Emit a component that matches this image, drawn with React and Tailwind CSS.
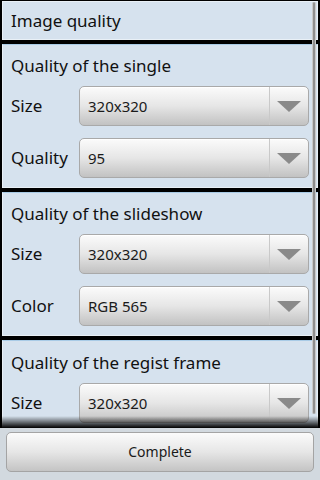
import React from "react";

const font = { fontFamily: '"Noto Sans", "Open Sans", "DejaVu Sans", sans-serif' };

function Spinner({ value }) {
  return (
    <div className="flex h-[40px] w-[230px] rounded-[5px] border border-[#a9a9a9] bg-gradient-to-b from-[#fbfbfb] via-[#e6e6e6] to-[#c2c2c2] shadow-[inset_0_1px_0_#ffffff]">
      <div className="flex flex-1 items-center pl-[8px] text-[15px] text-[#1a1a1a]">
        {value}
      </div>
      <div className="flex w-[39px] items-center justify-center border-l border-[#c9c9c9]">
        <svg width="24" height="11" viewBox="0 0 24 11">
          <path d="M0 0 H24 L12 11 Z" fill="#8a8a8a" />
        </svg>
      </div>
    </div>
  );
}

function Row({ label, value }) {
  return (
    <div className="flex h-[40px] shrink-0 items-center">
      <span className="w-[76px] pl-[8px] text-[17px] text-[#111]">{label}</span>
      <Spinner value={value} />
    </div>
  );
}

function Section({ title, rows }) {
  return (
    <div className="mx-[2px] flex h-[144px] shrink-0 flex-col gap-[12px] border border-[#e9f0f6] border-t-[#a9cbe6] bg-[#d6e2ee] pb-[9px] pt-[5px]">
      <div className="-mb-[8px] flex h-[33px] items-center pl-[8px] text-[17px] text-[#111]">
        {title}
      </div>
      {rows.map((r) => (
        <Row key={r.label} label={r.label} value={r.value} />
      ))}
    </div>
  );
}

export default function App() {
  return (
    <div className="flex h-[480px] w-[320px] flex-col overflow-hidden bg-black" style={font}>
      <div className="relative h-[428px] shrink-0 overflow-hidden">
        <div className="flex flex-col gap-[4px] pt-[1px]">
          <div className="mx-[2px] flex h-[39px] items-center border border-[#e9f0f6] bg-[#d6e2ee] pl-[8px] text-[17px] text-[#111]">
            Image quality
          </div>
          <Section
            title="Quality of the single"
            rows={[
              { label: "Size", value: "320x320" },
              { label: "Quality", value: "95" },
            ]}
          />
          <Section
            title="Quality of the slideshow"
            rows={[
              { label: "Size", value: "320x320" },
              { label: "Color", value: "RGB 565" },
            ]}
          />
          <Section
            title="Quality of the regist frame"
            rows={[{ label: "Size", value: "320x320" }]}
          />
        </div>
        {/* scrollbar */}
        <div className="absolute right-[4px] top-[2px] h-[412px] w-[4px] rounded-[2px] border-x border-[#c8c8c8] bg-[#8e8e8e]" />
        {/* bottom fade */}
        <div className="absolute bottom-0 left-0 right-0 h-[12px] bg-gradient-to-b from-transparent to-black" />
      </div>
      <div className="flex flex-1 flex-col bg-[#d2d9df] px-[6px] pt-[4px]">
        <div className="flex h-[40px] w-full items-center justify-center rounded-[5px] border border-[#a4a4a4] bg-gradient-to-b from-[#fbfbfb] via-[#e6e6e6] to-[#c4c4c4] text-[14px] leading-[20px] text-[#1a1a1a]">
          Complete
        </div>
      </div>
    </div>
  );
}
